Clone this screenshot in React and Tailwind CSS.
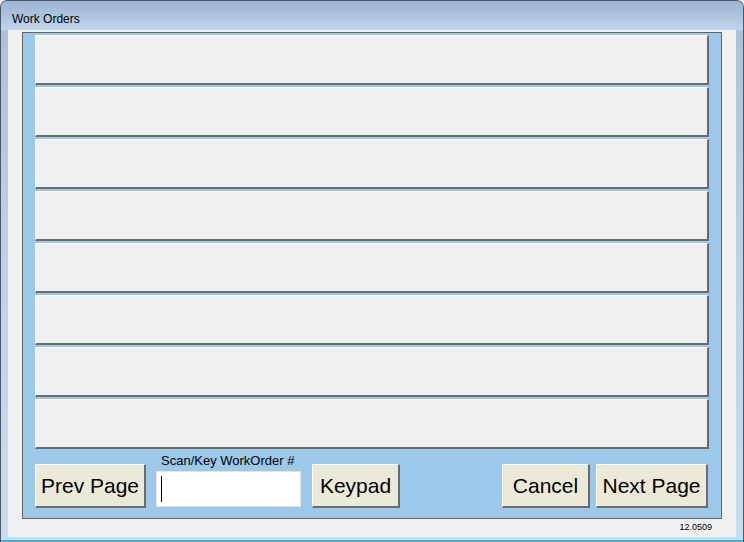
const rows = [0, 1, 2, 3, 4, 5, 6, 7];

function WinButton({ children, className = '' }) {
  return (
    <button
      className={`h-[44px] bg-[#ece9d8] text-[21px] text-black border-t border-l border-t-white border-l-white border-b-2 border-r-2 border-b-[#6b6b6b] border-r-[#6b6b6b] font-['Liberation_Sans',Arial,sans-serif] leading-none ${className}`}
    >
      {children}
    </button>
  );
}

export default function App() {
  return (
    <div className="w-[744px] h-[542px] flex flex-col rounded-t-[7px] border border-[#4a5868] border-b-0 bg-gradient-to-b from-[#a9c0db] via-[#bcd3ea] to-[#c6dcf1] overflow-hidden font-['Liberation_Sans',Arial,sans-serif]">
      <div className="h-[29px] flex items-center pl-[11px] pt-[6px] text-[12px] text-black bg-gradient-to-b from-[#9bb4d2] to-[#bfd5ec]">
        Work Orders
      </div>

      <div className="flex-1 mx-[7px] bg-[#f0f0f0] flex flex-col pl-[14px] pr-[14px] pt-[2px]">
        <div className="h-[487px] border border-[#646464] bg-[#9cc8ea] pt-[2px] pl-[12px] pr-[12px] flex flex-col">
          <div className="flex flex-col gap-[2px]">
            {rows.map((r) => (
              <div
                key={r}
                className="h-[50px] bg-[#f0f0f0] border-t border-l border-t-white border-l-white border-b-2 border-r-2 border-b-[#6b6b6b] border-r-[#6b6b6b]"
              />
            ))}
          </div>

          <div className="mt-[4px] flex items-end">
            <WinButton className="w-[111px]">Prev Page</WinButton>
            <div className="ml-[10px] w-[145px] flex flex-col mb-[1px]">
              <div className="text-[13px] leading-[15px] text-black pl-[5px] mb-[3px]">
                Scan/Key WorkOrder #
              </div>
              <div className="h-[36px] bg-white border border-[#e3e3e3] flex items-center pl-[4px]">
                <div className="w-[1px] h-[26px] bg-black" />
              </div>
            </div>
            <WinButton className="ml-[11px] w-[88px]">Keypad</WinButton>
            <div className="flex-1" />
            <WinButton className="w-[88px]">Cancel</WinButton>
            <WinButton className="ml-[6px] w-[112px] mr-[1px]">Next Page</WinButton>
          </div>
        </div>
        <div className="text-right text-[9px] leading-[10px] text-black pr-[10px] mt-[3px]">12.0509</div>
      </div>

      <div className="h-[5px] mx-0 bg-[#c6dcf1] border-b-2 border-b-[#3fb2cf]" />
    </div>
  );
}
